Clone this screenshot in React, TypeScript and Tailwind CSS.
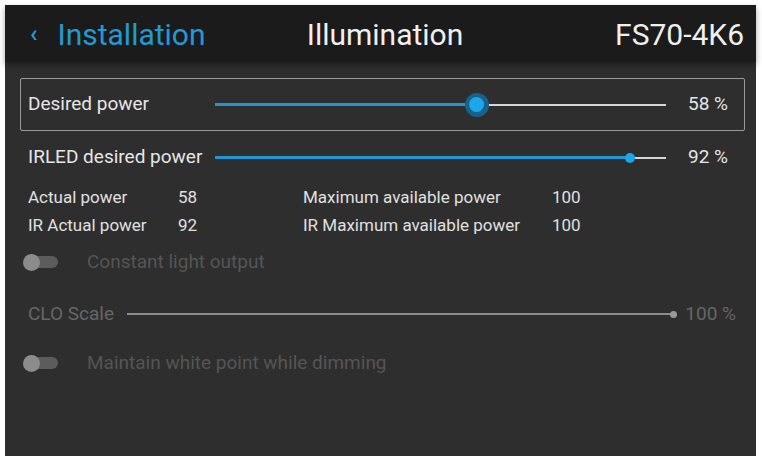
import React from "react";

const font = { fontFamily: "Roboto, 'Noto Sans', Arial, sans-serif" };

function Slider({ value, thumb }: { value: number; thumb: "big" | "small" }) {
  return (
    <div className="relative flex-1 h-[20px] flex items-center">
      <div className="w-full h-[2px] bg-[#d6d6d6]" />
      <div className="absolute left-0 h-[3px] bg-[#1e96d2]" style={{ width: `${value}%` }} />
      {thumb === "big" ? (
        <div
          className="absolute w-[24px] h-[24px] -ml-[12px] rounded-full bg-[#17628a] flex items-center justify-center"
          style={{ left: `${value}%` }}
        >
          <div className="w-[15px] h-[15px] rounded-full bg-[#1ea6ea]" />
        </div>
      ) : (
        <div
          className="absolute w-[10px] h-[10px] -ml-[5px] rounded-full bg-[#1ea6ea]"
          style={{ left: `${value}%` }}
        />
      )}
    </div>
  );
}

function Toggle({ label }: { label: string }) {
  return (
    <div className="flex items-center h-[24px]">
      <div className="relative w-[34px] h-[12px] ml-[4px] rounded-full bg-[#5c5c5c] flex items-center">
        <div className="absolute -left-[1px] w-[17px] h-[17px] rounded-full bg-[#8c8c8c]" />
      </div>
      <span className="ml-[29px] text-[19px] text-[#555555]">{label}</span>
    </div>
  );
}

export default function App() {
  return (
    <div className="w-[762px] h-[456px] bg-white pt-[5px] pl-[5px] pr-[6px]" style={font}>
      <div className="h-full bg-[#2e2e2e] flex flex-col">
        <header className="h-[57px] bg-[#1b1b1b] flex items-center pl-[25px] pr-[12px] pt-[2px] shadow-[0_3px_6px_rgba(0,0,0,0.35)]">
          <div className="flex-1 flex items-center text-[#2399d4]">
            <span className="text-[24px] font-bold mr-[20px] -mt-[2px]">‹</span>
            <span className="text-[30px]">Installation</span>
          </div>
          <div className="text-[30px] text-[#f0f0f0] -ml-[4px]">Illumination</div>
          <div className="flex-1 text-right text-[30px] text-[#f0f0f0]">FS70-4K6</div>
        </header>

        <div className="pl-[15px] pr-[11px] pt-[16px] flex flex-col">
          <div className="h-[53px] border border-[#9a9a9a] rounded-[2px] flex items-center pl-[7px] pr-[16px]">
            <span className="w-[187px] text-[19px] text-[#e6e6e6]">Desired power</span>
            <Slider value={58} thumb="big" />
            <span className="w-[62px] text-right text-[19px] text-[#e6e6e6]">58 %</span>
          </div>
          <div className="h-[53px] flex items-center pl-[8px] pr-[17px]">
            <span className="w-[187px] text-[19px] text-[#e6e6e6]">IRLED desired power</span>
            <Slider value={92} thumb="small" />
            <span className="w-[62px] text-right text-[19px] text-[#e6e6e6]">92 %</span>
          </div>

          <div className="pl-[8px] text-[17px] text-[#e0e0e0] flex flex-col">
            <div className="flex h-[28px] items-center">
              <span className="w-[150px]">Actual power</span>
              <span className="w-[125px]">58</span>
              <span className="w-[249px]">Maximum available power</span>
              <span>100</span>
            </div>
            <div className="flex h-[28px] items-center">
              <span className="w-[150px]">IR Actual power</span>
              <span className="w-[125px]">92</span>
              <span className="w-[249px]">IR Maximum available power</span>
              <span>100</span>
            </div>
          </div>

          <div className="mt-[10px]">
            <Toggle label="Constant light output" />
          </div>

          <div className="flex items-center h-[30px] mt-[25px] pl-[8px] pr-[9px] text-[19px] text-[#666666]">
            <span className="mr-[13px]">CLO Scale</span>
            <div className="flex-1 h-[2px] bg-[#8c8c8c]" />
            <div className="w-[7px] h-[7px] rounded-full bg-[#9a9a9a] -ml-[2px]" />
            <span className="ml-[8px]">100 %</span>
          </div>

          <div className="mt-[22px]">
            <Toggle label="Maintain white point while dimming" />
          </div>
        </div>
      </div>
    </div>
  );
}
